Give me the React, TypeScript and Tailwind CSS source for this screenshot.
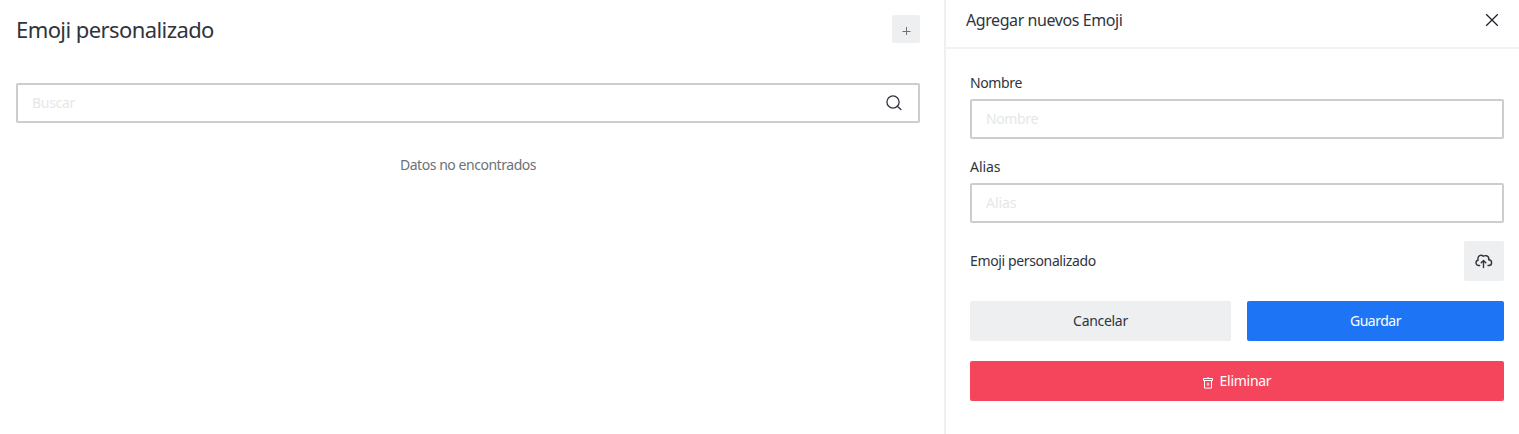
import type { ReactNode } from 'react';

function Field({ label, className, tracking }: { label: string; className: string; tracking: string }) {
  return (
    <label className={`block ${className}`}>
      <span className={`block h-5 text-[14px] leading-5 ${tracking}`}>{label}</span>
      <input
        placeholder={label}
        className={`mt-1.5 block h-10 w-full rounded-[2px] border-2 border-[#cbced1] px-3.5 pb-px text-[14px] leading-5 outline-none placeholder:text-[#e4e7ea] ${tracking}`}
      />
    </label>
  );
}

function Button({ className, children }: { className: string; children: ReactNode }) {
  return (
    <button className={`flex h-10 items-center justify-center rounded-[2px] text-[14px] leading-5 ${className}`}>
      {children}
    </button>
  );
}

export default function App() {
  return (
    <div className="flex h-[434px] w-[1519px] overflow-hidden bg-white font-['Noto_Sans',sans-serif] text-[#2f343d]">
      <main className="w-[944px] shrink-0 pr-6 pl-4">
        <header className="flex h-[58px] items-center justify-between">
          <h1 className="text-[22px] leading-8 tracking-[-0.58px]">Emoji personalizado</h1>
          <button aria-label="Agregar" className="flex size-7 items-center justify-center rounded-[2px] bg-[#eeeff1]">
            <svg width="10" height="10" viewBox="0 0 10 10" className="mt-1" fill="none" stroke="#6c727a">
              <path d="M5.5 1v8M1.5 5.5h8" />
            </svg>
          </button>
        </header>
        <div className="mt-[25px] flex h-10 items-center rounded-[2px] border-2 border-[#cbced1] pr-4 pl-3.5">
          <input placeholder="Buscar" className="h-5 flex-1 text-[14px] leading-5 tracking-[-0.3px] outline-none placeholder:text-[#e4e7ea]" />
          <svg width="16" height="16" viewBox="0 0 16 16" fill="none" stroke="#2f343d" strokeWidth="1.3">
            <circle cx="7" cy="7" r="6.1" />
            <path d="m11.3 11.3 3.6 3.3" strokeLinecap="round" />
          </svg>
        </div>
        <p className="mt-8 text-center text-[14px] leading-5 tracking-[-0.46px] text-[#6c727a]">Datos no encontrados</p>
      </main>
      <aside className="flex-1 border-l-2 border-[#eeeff1]">
        <header className="flex h-[49px] items-center justify-between border-b-2 border-[#f2f3f5] pr-5 pb-[7px] pl-5">
          <h2 className="text-[16px] leading-6 tracking-[-0.42px]">Agregar nuevos Emoji</h2>
          <svg width="14" height="14" viewBox="0 0 14 14" fill="none" stroke="#1f2329" strokeWidth="1.3">
            <path d="m1.2 1.2 11.6 11.6M12.8 1.2 1.2 12.8" />
          </svg>
        </header>
        <div className="pr-[15px] pl-6">
          <Field label="Nombre" className="pt-6" tracking="tracking-[-0.38px]" />
          <Field label="Alias" className="pt-[18px]" tracking="tracking-[-0.05px]" />
          <div className="mt-[18px] flex h-10 items-center justify-between">
            <span className="text-[14px] leading-5 tracking-[-0.37px]">Emoji personalizado</span>
            <button aria-label="Subir" className="flex size-10 items-center justify-center rounded-[2px] bg-[#eeeff1]">
              <svg width="18" height="16" viewBox="0 0 18 16" fill="none" stroke="#2f343d" strokeWidth="1.4" strokeLinecap="round" strokeLinejoin="round">
                <path d="M4.6 12.5H3.8C2.2 12.5 1 11.3 1 9.8c0-1.4.9-2.4 2.1-2.6C2.3 4.8 3.7 2.2 6 2.2c1 0 1.8.4 2.3 1 .9-.5 2.1-.7 3.2-.4 1.8.5 2.6 2 2.2 4 1.7.1 2.9 1.3 2.9 2.9s-1.2 2.8-2.8 2.8H13" />
                <path d="M8.5 14.5V7.7M6.2 9.7l2.3-2.3 2.3 2.3" />
              </svg>
            </button>
          </div>
          <div className="mt-5 flex gap-4">
            <Button className="w-[261px] bg-[#eeeff1] tracking-[-0.3px]">Cancelar</Button>
            <Button className="flex-1 bg-[#1d74f5] tracking-[-0.5px] text-white">Guardar</Button>
          </div>
          <Button className="mt-5 w-full gap-1.5 bg-[#f5455c] tracking-[-0.28px] text-white">
            <svg width="11" height="13" viewBox="0 0 11 13" className="mt-[3px]" fill="none" stroke="currentColor" strokeWidth="1">
              <path d="M.5 2.5h9v2h-9zM1.5 4.5v7.6h7V4.5M5 2.3V1" />
              <path d="M4.2 7.2h1.6v2H4.2z" strokeOpacity=".7" />
            </svg>
            Eliminar
          </Button>
        </div>
      </aside>
    </div>
  );
}
